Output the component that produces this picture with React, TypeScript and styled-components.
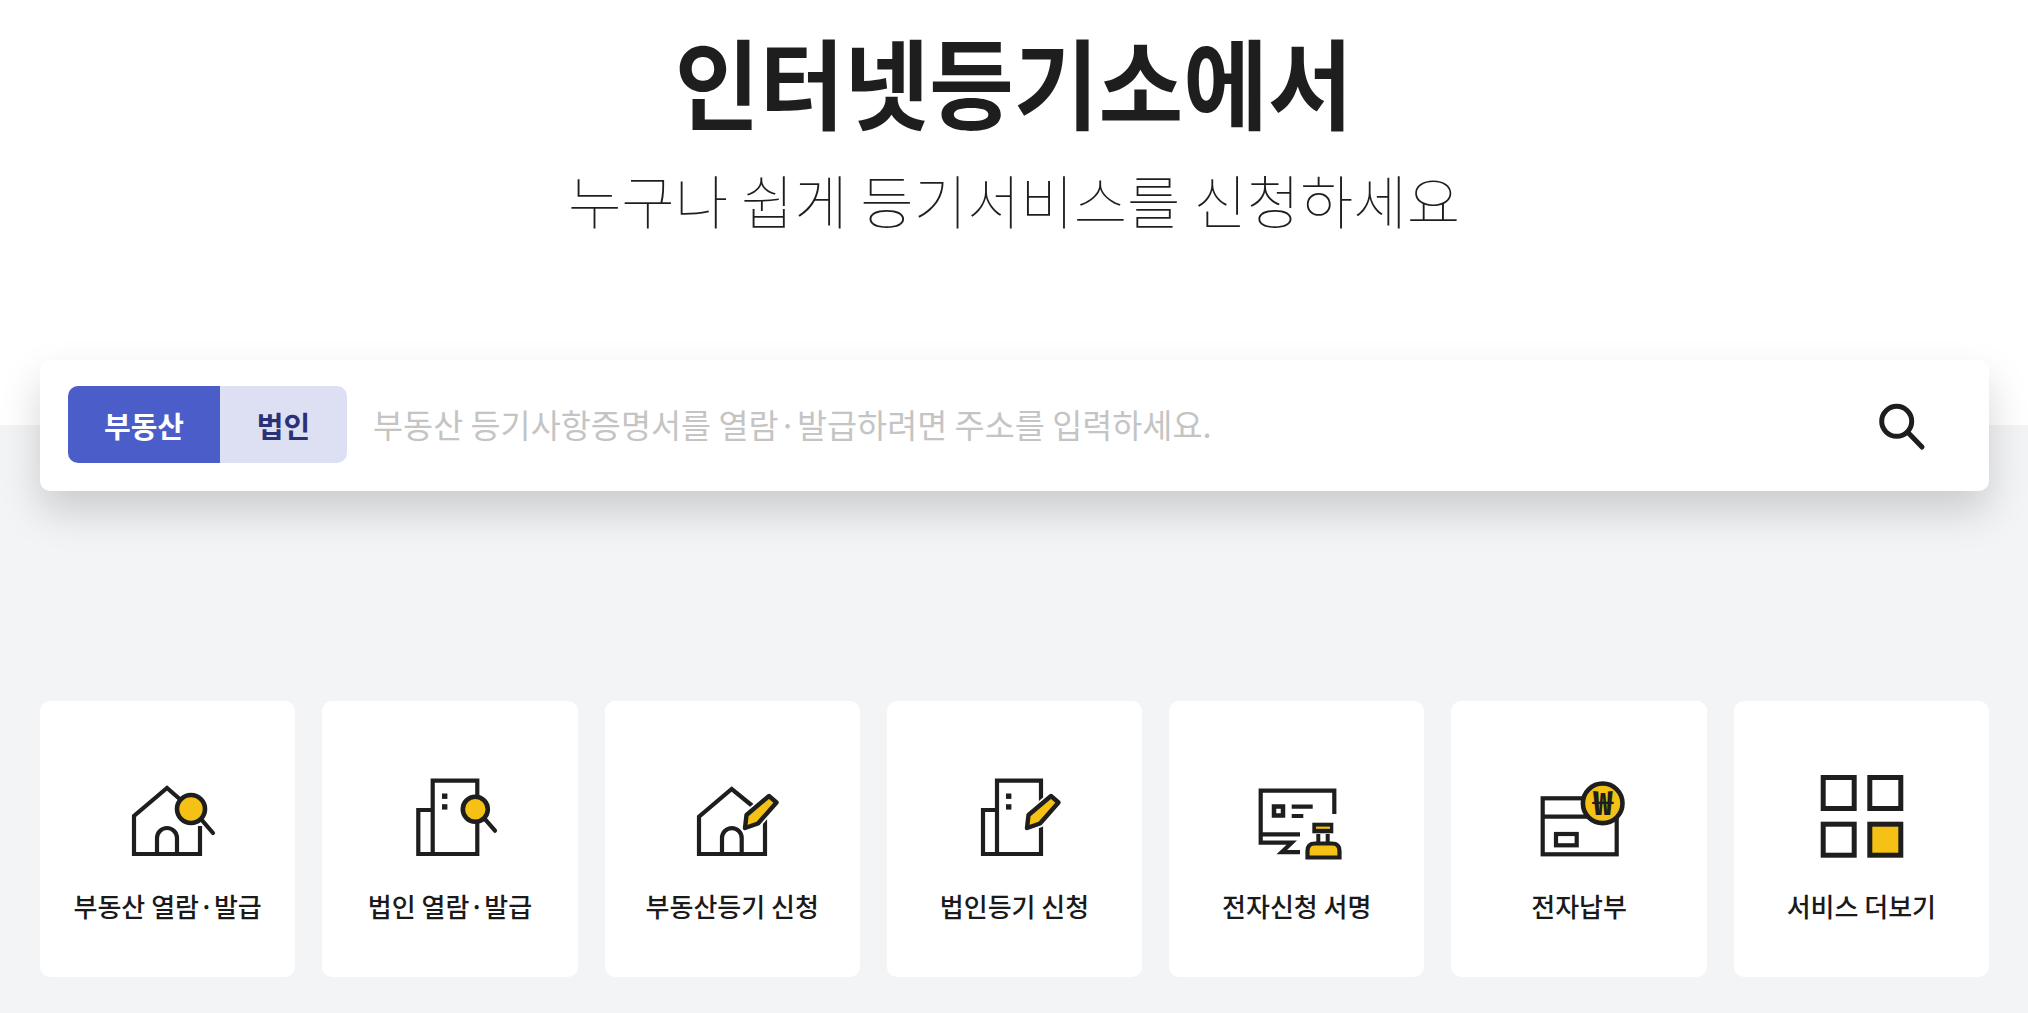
import React from 'react';
import styled, {createGlobalStyle} from "styled-components";

const Colors = {
    ink: "#1e1e1e",
    yellow: "#f5c115",
    page: "#f3f4f6",
    blue: "#4b5dc8",
    blueLight: "#dde0f2",
    navy: "#2a3177",
    placeholder: "#c4c4c4",
}

const GlobalStyle = createGlobalStyle`
    html, body {
        margin: 0;
        padding: 0;
        background: ${Colors.page};
        font-family: "Noto Sans CJK KR", "Noto Sans", sans-serif;
        color: ${Colors.ink};
    }
`

const Page = styled.div`
    width: 2028px;
    height: 1013px;
    overflow: hidden;
    display: flex;
    flex-direction: column;
`

const Hero = styled.header`
    height: 425px;
    background: #fff;
    display: flex;
    flex-direction: column;
    align-items: center;
    padding-top: 21px;
    box-sizing: border-box;
`

const Title = styled.h1`
    margin: 0;
    font-size: 98px;
    line-height: 116px;
    font-weight: 700;
    transform: scaleX(0.94);
`

const Subtitle = styled.p`
    margin: 22px 0 0;
    font-size: 58px;
    line-height: 80px;
    font-weight: 100;
`

const Main = styled.main`
    display: flex;
    flex-direction: column;
    padding: 0 39px 0 40px;
`

const SearchBar = styled.div`
    height: 131px;
    margin-top: -65px;
    padding: 0 61px 0 28px;
    background: #fff;
    border-radius: 10px;
    box-shadow: 0 20px 40px rgba(0, 0, 0, 0.17);
    display: flex;
    align-items: center;
    box-sizing: border-box;
`

const Tabs = styled.div`
    display: flex;
    height: 77px;
    margin-bottom: 2px;
    border-radius: 10px;
    overflow: hidden;
`

const Tab = styled.button<{ $active?: boolean; $width: number }>`
    width: ${p => p.$width}px;
    border: 0;
    padding: 0;
    font-family: inherit;
    font-size: 29px;
    font-weight: 700;
    background: ${p => (p.$active ? Colors.blue : Colors.blueLight)};
    color: ${p => (p.$active ? "#fff" : Colors.navy)};
`

const Placeholder = styled.div`
    flex: 1;
    margin: 0 0 4px 26px;
    font-size: 32.7px;
    color: ${Colors.placeholder};
`

const Cards = styled.div`
    margin-top: 210px;
    display: grid;
    grid-template-columns: repeat(7, 1fr);
    gap: 27px;
`

const Card = styled.a`
    height: 276px;
    background: #fff;
    border-radius: 10px;
    padding-top: 67px;
    box-sizing: border-box;
    display: flex;
    flex-direction: column;
    align-items: center;
`

const CardLabel = styled.span`
    margin-top: 24px;
    font-size: 26px;
    line-height: 36px;
    font-weight: 500;
    color: #1a1a1a;
`

const IconSvg = styled.svg.attrs({viewBox: "0 0 96 96", fill: "none"})<{ $weight?: number }>`
    width: 96px;
    height: 96px;
    stroke: ${Colors.ink};
    stroke-width: ${p => p.$weight ?? 4.2};
`

const Lens = ({cx, cy, r, to}: { cx: number; cy: number; r: number; to: [number, number] }) => (
    <>
        <path d={`M${cx + r * 0.7} ${cy + r * 0.7}L${to[0]} ${to[1]}`} strokeLinecap="round"/>
        <circle cx={cx} cy={cy} r={r} fill={Colors.yellow} strokeWidth={4.6}/>
    </>
)

const pencilPath = "M61 60l1.5-13L85 28 92.5 34.5 74 55.5z"

const Pencil = () => (
    <>
        <path d={pencilPath} stroke="#fff" strokeWidth={8} strokeLinejoin="round"/>
        <path d={pencilPath} fill={Colors.yellow} strokeWidth={4.4} strokeLinejoin="round"/>
    </>
)

const Dots = () => (
    <>
        <rect x={40} y={25.5} width={5.4} height={5.4} fill={Colors.ink} stroke="none"/>
        <rect x={40} y={36.2} width={5.4} height={5.4} fill={Colors.ink} stroke="none"/>
    </>
)

const HouseSearchIcon = () => (
    <IconSvg>
        <path d="M62 33L47 20 14 48V86H80V58"/>
        <path d="M37 86V70a10 10 0 0 1 20 0V86"/>
        <Lens cx={71} cy={41} r={14} to={[93, 65]}/>
    </IconSvg>
)

const BuildingSearchIcon = () => (
    <IconSvg>
        <path d="M30.7 42H16.3V86H75.3V12.7H30.7V86"/>
        <Dots/>
        <Lens cx={73.3} cy={41.3} r={12.5} to={[93, 62.7]}/>
    </IconSvg>
)

const HouseEditIcon = () => (
    <IconSvg>
        <path d="M71 40L47.7 21 15 48.7V86H81V47"/>
        <path d="M38 86V70a9.8 9.8 0 0 1 19.7 0V86"/>
        <Pencil/>
    </IconSvg>
)

const BuildingEditIcon = () => (
    <IconSvg>
        <path d="M31 42H17V86H75V12.7H31V86"/>
        <Dots/>
        <Pencil/>
    </IconSvg>
)

const SignIcon = () => (
    <IconSvg>
        <path d="M85.3 46V22.7H11.7V74.7H42.7L32.7 84.2H51"/>
        <path d="M11.7 66.3H51"/>
        <rect x={25} y={38.5} width={9} height={9} strokeWidth={4.5}/>
        <path d="M42.7 38.7H63.7M42.7 48H54.3"/>
        <rect x={63.3} y={54.7} width={21} height={10.6} fill={Colors.ink} stroke="none"/>
        <rect x={67} y={58.6} width={14} height={2.2} fill={Colors.yellow} stroke="none"/>
        <path d="M69.3 66V74M78.7 66V74" strokeWidth={4}/>
        <path d="M58.5 89.5V83Q58.5 75.5 66 75.5H83Q90.5 75.5 90.5 83V89.5Z" fill={Colors.yellow}/>
    </IconSvg>
)

const WonText = styled.text`
    font-family: "Noto Sans CJK KR", sans-serif;
    font-size: 33px;
    font-weight: 900;
    fill: ${Colors.ink};
    stroke: none;
    text-anchor: middle;
`

const PaymentIcon = () => (
    <IconSvg>
        <rect x={11.7} y={30.3} width={74} height={56}/>
        <path d="M11.7 48.7H85.7"/>
        <rect x={25} y={66} width={20.7} height={11.3}/>
        <circle cx={71.7} cy={35.3} r={19.8} fill={Colors.yellow} strokeWidth={4.6}/>
        <WonText x={71.7} y={47}>₩</WonText>
    </IconSvg>
)

const MoreIcon = () => (
    <IconSvg $weight={5}>
        <rect x={10.2} y={9.5} width={31} height={31}/>
        <rect x={56.8} y={9.5} width={31} height={31}/>
        <rect x={10.2} y={56.2} width={31} height={31}/>
        <rect x={56.8} y={56.2} width={31} height={31} fill={Colors.yellow}/>
    </IconSvg>
)

const SearchSvg = styled.svg.attrs({viewBox: "0 0 52 52", fill: "none"})`
    width: 52px;
    height: 52px;
    flex: none;
    stroke: ${Colors.ink};
    stroke-width: 5;
    stroke-linecap: round;
`

const services = [
    {label: "부동산 열람·발급", Icon: HouseSearchIcon},
    {label: "법인 열람·발급", Icon: BuildingSearchIcon},
    {label: "부동산등기 신청", Icon: HouseEditIcon},
    {label: "법인등기 신청", Icon: BuildingEditIcon},
    {label: "전자신청 서명", Icon: SignIcon},
    {label: "전자납부", Icon: PaymentIcon},
    {label: "서비스 더보기", Icon: MoreIcon},
]

export default function App() {
    return (
        <Page>
            <GlobalStyle/>
            <Hero>
                <Title>인터넷등기소에서</Title>
                <Subtitle>누구나 쉽게 등기서비스를 신청하세요</Subtitle>
            </Hero>
            <Main>
                <SearchBar>
                    <Tabs>
                        <Tab $active $width={152}>부동산</Tab>
                        <Tab $width={127}>법인</Tab>
                    </Tabs>
                    <Placeholder>부동산 등기사항증명서를 열람·발급하려면 주소를 입력하세요.</Placeholder>
                    <SearchSvg>
                        <circle cx={20.7} cy={21.3} r={15}/>
                        <path d="M31.5 32L46 47"/>
                    </SearchSvg>
                </SearchBar>
                <Cards>
                    {services.map(({label, Icon}) => (
                        <Card key={label}>
                            <Icon/>
                            <CardLabel>{label}</CardLabel>
                        </Card>
                    ))}
                </Cards>
            </Main>
        </Page>
    )
}
